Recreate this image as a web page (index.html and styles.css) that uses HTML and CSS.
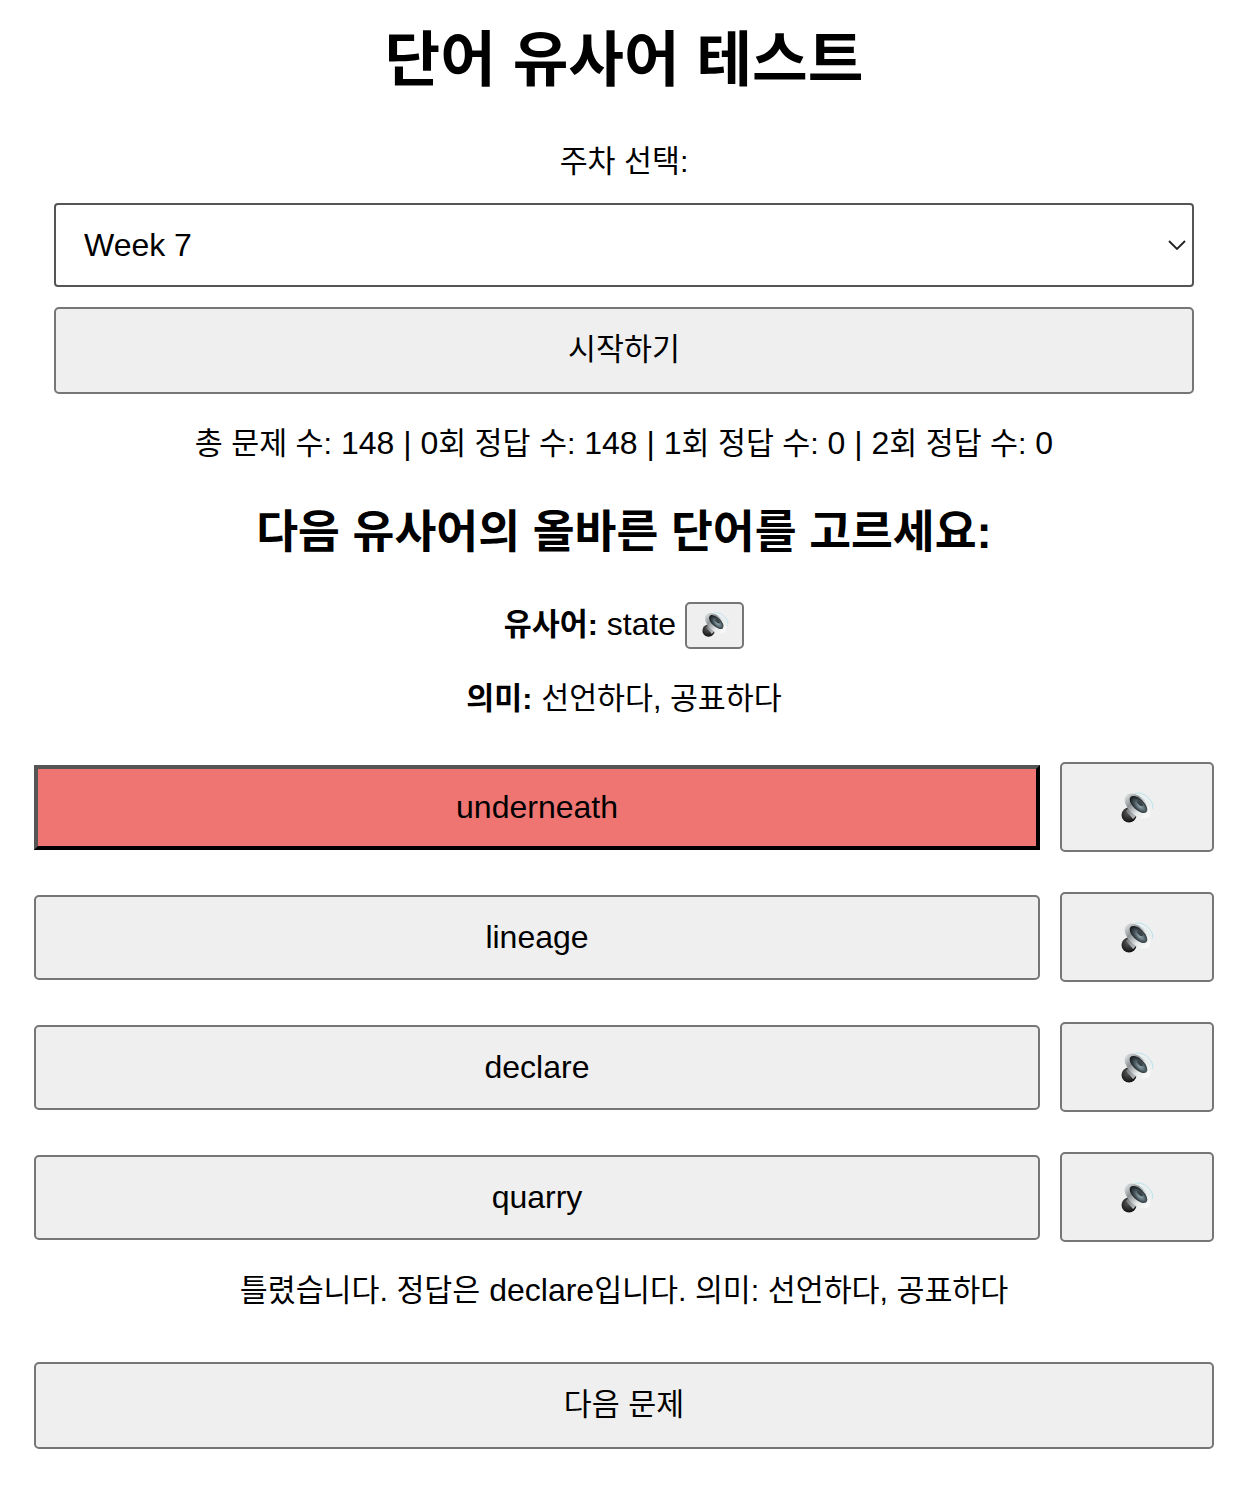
FILE: index.html
```html
<!DOCTYPE html>
<html lang="ko">
<head>
    <meta charset="UTF-8">
    <title>단어 유사어 테스트</title>
    <link rel="stylesheet" href="styles.css">
</head>
<body>

<svg class="sprite" width="0" height="0" aria-hidden="true">
    <defs>
        <linearGradient id="rim" x1="0" y1="0" x2="1" y2="0">
            <stop offset="0" stop-color="#dcdfe0"/>
            <stop offset="0.3" stop-color="#8d9295"/>
            <stop offset="0.65" stop-color="#e8eaea"/>
            <stop offset="1" stop-color="#fcfcfc"/>
        </linearGradient>
        <linearGradient id="cone" x1="0" y1="0" x2="1" y2="1">
            <stop offset="0" stop-color="#2e3032"/>
            <stop offset="0.55" stop-color="#a2a6a8"/>
            <stop offset="1" stop-color="#dfe1e2"/>
        </linearGradient>
        <radialGradient id="magnet" cx="0.45" cy="0.35" r="0.7">
            <stop offset="0" stop-color="#5a5a5a"/>
            <stop offset="1" stop-color="#0c0c0c"/>
        </radialGradient>
        <radialGradient id="inner" cx="0.6" cy="0.5" r="0.6">
            <stop offset="0" stop-color="#9cb4bb"/>
            <stop offset="0.55" stop-color="#47555b"/>
            <stop offset="1" stop-color="#0f1214"/>
        </radialGradient>
        <symbol id="speaker" viewBox="0 0 33 33">
            <path d="M14 2.500C20 .5 28 5 31 12c1 2.500 1 4.500 0 6" fill="none" stroke="#a8e0ea" stroke-width=".8"/>
            <path d="M16 5c5 0 11 4 13 10" fill="none" stroke="#c8ecf2" stroke-width=".7"/>
            <circle cx="8" cy="24" r="7.500" fill="url(#magnet)"/>
            <path d="M4 6 9 15 5 20l7 8 5-5 10 3z" fill="url(#cone)"/>
            <ellipse cx="16.500" cy="15" rx="15.500" ry="9" transform="rotate(43 16.500 15)" fill="url(#rim)"/>
            <ellipse cx="17.500" cy="13.500" rx="11" ry="5.500" transform="rotate(43 17.500 13.500)" fill="url(#inner)"/>
            <ellipse cx="19" cy="12.500" rx="3.500" ry="1.800" transform="rotate(43 19 12.500)" fill="#3a4347"/>
        </symbol>
    </defs>
</svg>

<div class="container">
    <h1>단어 유사어 테스트</h1>

    <div class="setup">
        <label class="week-label" for="week">주차 선택:</label>
        <div class="select-wrap">
            <select id="week">
                <option>Week 7</option>
            </select>
            <svg class="chevron" viewBox="0 0 18 10" width="18" height="10"><path d="M1 1l8 8 8-8" fill="none" stroke="#222" stroke-width="1.800"/></svg>
        </div>
        <button class="btn ko-btn start-btn">시작하기</button>
    </div>

    <p class="stats"><span class="ko">총 문제 수:</span> 148 | 0<span class="ko">회 정답 수:</span> 148 | 1<span class="ko">회 정답 수:</span> 0 | 2<span class="ko">회 정답 수:</span> 0</p>

    <h2>다음 유사어의 올바른 단어를 고르세요:</h2>

    <div class="synonym">
        <span class="synonym-text"><strong class="ko">유사어:</strong> state</span>
        <button class="btn small-audio"><svg class="icon-small"><use href="#speaker"/></svg></button>
    </div>
    <p class="meaning"><strong class="ko">의미:</strong> <span class="ko">선언하다, 공표하다</span></p>

    <div class="choices">
        <div class="choice">
            <button class="btn word wrong">underneath</button>
            <button class="btn audio"><svg class="icon"><use href="#speaker"/></svg></button>
        </div>
        <div class="choice">
            <button class="btn word">lineage</button>
            <button class="btn audio"><svg class="icon"><use href="#speaker"/></svg></button>
        </div>
        <div class="choice">
            <button class="btn word">declare</button>
            <button class="btn audio"><svg class="icon"><use href="#speaker"/></svg></button>
        </div>
        <div class="choice">
            <button class="btn word">quarry</button>
            <button class="btn audio"><svg class="icon"><use href="#speaker"/></svg></button>
        </div>
    </div>

    <p class="feedback"><span class="ko">틀렸습니다. 정답은</span> declare<span class="ko">입니다. 의미: 선언하다, 공표하다</span></p>

    <button class="btn ko-btn next-btn">다음 문제</button>
</div>

</body>
</html>
```
FILE: styles.css
```css
body {
    font-family: "Liberation Sans", Arial, "Noto Sans CJK KR", sans-serif;
    margin: 0;
    padding: 0;
    background-color: #fff;
    color: #000;
    font-size: 32px;
}

.sprite {
    position: absolute;
}

.ko {
    font-size: 30.400px;
}

.container {
    display: flex;
    flex-direction: column;
    padding: 0 32px 47px 34px;
    text-align: center;
}

h1 {
    font-size: 60.500px;
    line-height: 74px;
    margin: 23px 0 0;
}

.setup {
    display: flex;
    flex-direction: column;
    padding: 0 20px;
    margin-top: 46px;
}

.week-label {
    font-size: 30.400px;
    line-height: 37px;
}

.select-wrap {
    position: relative;
    margin-top: 23px;
}

select {
    display: block;
    width: 100%;
    height: 84px;
    padding: 0 28px;
    font-family: inherit;
    font-size: 32px;
    color: #000;
    background: #fff;
    border: 2px solid #555;
    border-radius: 4px;
    appearance: none;
}

.chevron {
    position: absolute;
    right: 8px;
    top: 37px;
}

.btn {
    font-family: inherit;
    font-size: 32px;
    color: #000;
    background-color: #efefef;
    border: 2px solid #767676;
    border-radius: 5px;
    padding: 0;
}

.ko-btn {
    font-size: 30.400px;
    padding-bottom: 8px;
}

.start-btn {
    height: 87px;
    margin-top: 20px;
}

.stats {
    margin: 31px 0 0;
    line-height: 37px;
}

h2 {
    font-size: 45.500px;
    line-height: 56px;
    margin: 43px 0 0;
}

.synonym {
    display: flex;
    align-items: center;
    justify-content: center;
    gap: 9px;
    height: 47px;
    margin-top: 41px;
}

.synonym-text {
    padding-bottom: 8px;
}

.small-audio {
    width: 59px;
    height: 47px;
    padding: 0 0 2px 1px;
}

.meaning {
    margin: 31px 0 0;
    line-height: 37px;
}

.choices {
    display: flex;
    flex-direction: column;
    gap: 40px;
    margin-top: 45px;
}

.choice {
    display: flex;
    align-items: center;
    gap: 20px;
}

.word {
    flex: 1;
    height: 85px;
}

.wrong {
    background-color: #ef7572;
    border: 4px solid;
    border-color: #555 #000 #000 #555;
    border-radius: 0;
}

.audio {
    width: 154px;
    height: 90px;
}

.icon {
    width: 33px;
    height: 33px;
    display: block;
    margin: auto;
}

.icon-small {
    width: 27px;
    height: 27px;
    display: block;
    margin: auto;
}

.feedback {
    margin: 30px 0 0;
    line-height: 37px;
}

.next-btn {
    height: 87px;
    margin-top: 53px;
}
```
